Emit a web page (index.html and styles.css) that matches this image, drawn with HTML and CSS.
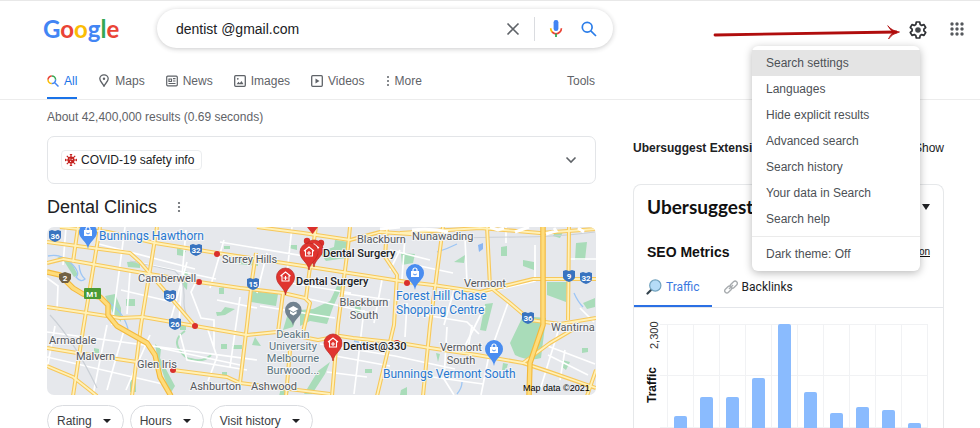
FILE: index.html
```html
<!DOCTYPE html>
<html lang="en">
<head>
<meta charset="utf-8">
<title>dentist @gmail.com - Google Search</title>
<link rel="stylesheet" href="styles.css">
</head>
<body>
<header class="header">
  <div class="topbar">
    <a class="logo" href="#" aria-label="Google"><span class="blue">G</span><span class="red">o</span><span class="yellow">o</span><span class="blue">g</span><span class="green">l</span><span class="red">e</span></a>
    <form class="search" role="search">
      <input class="search-input" type="text" value="dentist @gmail.com" aria-label="Search">
      <button class="icon-button clear" type="button" aria-label="Clear">
        <svg width="14" height="14" viewBox="0 0 14 14"><path d="M1.5 1.5l11 11M12.5 1.5l-11 11" stroke="#5f6368" stroke-width="1.6"/></svg>
      </button>
      <span class="divider"></span>
      <button class="icon-button mic" type="button" aria-label="Search by voice">
        <svg width="14" height="18" viewBox="0 0 14 18" fill="none"><rect x="4.600" y="0" width="4.800" height="11" rx="2.200" fill="#4285f4"/><path d="M1.700 8.300c0 1.700.6 3 1.700 3.900" stroke="#fbbc04" stroke-width="1.700"/><path d="M3.100 12c2.300 2.100 5.500 2.100 7.800 0 .9-.9 1.500-2.100 1.500-3.700" stroke="#ea4335" stroke-width="1.700"/><path d="M7 13.500V17" stroke="#34a853" stroke-width="1.800"/></svg>
      </button>
      <button class="icon-button" type="submit" aria-label="Google Search">
        <svg width="16" height="16" viewBox="0 0 16 16" fill="none" stroke="#2b7de9" stroke-width="1.700"><circle cx="6.200" cy="6.200" r="4.900"/><path d="M9.800 9.800l5.200 5.200"/></svg>
      </button>
    </form>
    <div class="actions">
      <svg class="arrow" width="188" height="18" viewBox="0 0 188 18" fill="none" stroke-linecap="round"><path d="M2 11L183 8" stroke="#b00d0d" stroke-width="2.800"/><path d="M175 2q4 5 11.500 6q-7.500 1.500-11 7q1.500-4 5-7q-3.500-2-5.500-6z" fill="#b00d0d" stroke="#b00d0d" stroke-width=".8"/></svg>
      <div class="settings">
        <button class="icon-button" type="button" aria-label="Settings" aria-expanded="true">
          <svg width="18" height="18" viewBox="0 0 18 18" fill="none"><path d="M7.300 1h3.400l.5 2.500 1.500.9 2.300-.8 1.700 2.900-1.800 1.600v1.800l1.800 1.600-1.700 2.900-2.300-.8-1.500.9-.5 2.500H7.300l-.5-2.500-1.500-.9-2.300.8-1.700-2.900 1.800-1.600V8.100L1.300 6.500 3 3.600l2.300.8 1.500-.9z" stroke="#303236" stroke-width="1.700" stroke-linejoin="round"/><circle cx="9" cy="9" r="2.800" fill="#44474b"/></svg>
        </button>
        <nav class="menu" aria-label="Settings menu">
          <a class="menu-item selected" href="#">Search settings</a>
          <a class="menu-item" href="#">Languages</a>
          <a class="menu-item" href="#">Hide explicit results</a>
          <a class="menu-item" href="#">Advanced search</a>
          <a class="menu-item" href="#">Search history</a>
          <a class="menu-item" href="#">Your data in Search</a>
          <a class="menu-item" href="#">Search help</a>
          <hr class="menu-rule">
          <a class="menu-item" href="#">Dark theme: Off</a>
        </nav>
      </div>
      <button class="icon-button" type="button" aria-label="Google apps">
        <svg width="14" height="14" viewBox="0 0 14 14" fill="#55585c"><circle cx="2" cy="2" r="1.700"/><circle cx="7" cy="2" r="1.700"/><circle cx="12" cy="2" r="1.700"/><circle cx="2" cy="7" r="1.700"/><circle cx="7" cy="7" r="1.700"/><circle cx="12" cy="7" r="1.700"/><circle cx="2" cy="12" r="1.700"/><circle cx="7" cy="12" r="1.700"/><circle cx="12" cy="12" r="1.700"/></svg>
      </button>
    </div>
  </div>
  <nav class="tabs" aria-label="Search types">
    <a class="tab active" href="#"><svg width="12" height="12" viewBox="0 0 12 12" fill="none" stroke-width="1.500"><path d="M1 4.800A3.800 3.800 0 0 1 4.800 1" stroke="#ea4335"/><path d="M4.800 1a3.800 3.800 0 0 1 3.800 3.800" stroke="#34a853"/><path d="M1 4.800a3.800 3.800 0 0 0 3.800 3.800" stroke="#fbbc04"/><path d="M8.600 4.800a3.800 3.800 0 0 1-3.800 3.800M7.500 7.500l4 4" stroke="#4285f4"/></svg>All</a>
    <a class="tab" href="#"><svg width="12" height="13" viewBox="-1 0 12 13" fill="none"><path d="M5 .8a4 4 0 0 0-4.200 4C.8 7.500 4 9.500 5 12.300 6 9.500 9.200 7.500 9.200 4.800A4 4 0 0 0 5 .8z" stroke="#5f6368" stroke-width="1.300"/><circle cx="5" cy="4.800" r="1.200" fill="#5f6368"/></svg>Maps</a>
    <a class="tab" href="#"><svg width="12" height="12" viewBox="0 0 12 12" fill="none" stroke="#5f6368" stroke-width="1.200"><rect x=".7" y="1.200" width="10.600" height="9.600" rx="1"/><path d="M3 4h2.500v2.500H3zM7 3.700h2.500M7 6h2.500M2.500 8.500h7"/></svg>News</a>
    <a class="tab" href="#"><svg width="12" height="12" viewBox="0 0 12 12" fill="none"><rect x=".7" y=".7" width="10.600" height="10.600" rx="1" stroke="#5f6368" stroke-width="1.300"/><path d="M2.500 9.300l2-2.500 1.300 1.500 1.700-2.300 2 3.300z" fill="#5f6368"/><circle cx="3.800" cy="3.800" r=".9" fill="#5f6368"/></svg>Images</a>
    <a class="tab" href="#"><svg width="12" height="12" viewBox="0 0 12 12" fill="none"><rect x=".7" y=".7" width="10.600" height="10.600" rx="1" stroke="#5f6368" stroke-width="1.300"/><path d="M4.500 3.500v5L8.500 6z" fill="#5f6368"/></svg>Videos</a>
    <a class="tab" href="#"><svg width="4" height="12" viewBox="0 0 4 12" fill="#5f6368"><circle cx="2" cy="2" r="1"/><circle cx="2" cy="6" r="1"/><circle cx="2" cy="10" r="1"/></svg>More</a>
    <a class="tab tools" href="#">Tools</a>
  </nav>
</header>

<main class="content">
  <section class="results">
    <p class="stats">About 42,400,000 results (0.69 seconds)</p>
    <div class="covid">
      <a class="covid-chip" href="#"><svg width="12" height="12" viewBox="0 0 12 12" fill="none" stroke="#c5221f"><path d="M6 0v12M0 6h12M1.800 1.800l8.400 8.400M10.200 1.800l-8.400 8.400" stroke-width="1.200"/><path d="M4.800.6h2.400M4.800 11.400h2.400M.6 4.800v2.400M11.400 4.800v2.400"/><circle cx="6" cy="6" r="3.500" fill="#c5221f" stroke="none"/><circle cx="4.900" cy="5" r=".6" fill="#fff" stroke="none"/><circle cx="7.200" cy="5.400" r=".6" fill="#fff" stroke="none"/><circle cx="5.600" cy="7.300" r=".6" fill="#fff" stroke="none"/></svg>COVID-19 safety info</a>
      <button class="icon-button" type="button" aria-label="Expand"><svg width="12" height="8" viewBox="0 0 12 8" fill="none"><path d="M1.500 1.500L6 6l4.500-4.500" stroke="#5f6368" stroke-width="1.600"/></svg></button>
    </div>
    <div class="section-title">
      <h1>Dental Clinics</h1>
      <button class="icon-button" type="button" aria-label="About this result"><svg width="4" height="12" viewBox="0 0 4 12" fill="#5f6368"><circle cx="2" cy="2" r="1.100"/><circle cx="2" cy="6" r="1.100"/><circle cx="2" cy="10" r="1.100"/></svg></button>
    </div>
    <svg class="map" viewBox="47 227 549 168" preserveAspectRatio="xMidYMid slice" role="img" aria-label="Map of dental clinics">
      <defs>
        <g id="bag-pin"><path d="M0 16C-1 8-9 6-9-1a9 9 0 0 1 18 0C9 6 1 8 0 16z" fill="#4a8df0"/><path d="M-4-3h8v6h-8z" fill="#fff"/><path d="M-2-3v-1a2 2 0 0 1 4 0v1" fill="none" stroke="#fff" stroke-width="1.200"/><path d="M-1.800 0q1.800 2 3.600 0" fill="none" stroke="#4a8df0" stroke-width="1"/></g>
        <g id="clinic-pin"><path d="M0 17C-1 9-9 7-9-1a9 9 0 0 1 18 0C9 7 1 9 0 17z" fill="#e0342f" stroke="#b92623" stroke-width=".7"/><path d="M-5-2l5-4 5 4M-3.500-2.500v5.500h7v-5.500M0-2v4M-2 0h4" fill="none" stroke="#fff" stroke-width="1.100"/></g>
        <path id="shield" d="M-6-5l3-1 3 1 3-1 3 1v6q0 3-6 5q-6-2-6-5z" fill="#3873bf"/>
        <g id="main-roads">
          <path d="M47 242L130 253L140 262L195 326"/>
          <path d="M60 227L108 232L155 243L180 247L217 253L310 267L407 282L433 285L480 292L533 279H596"/>
          <path d="M47 263L63 259L143 273L199 282L240 288L283 293L305 298L310 303L303 332"/>
          <path d="M47 307L120 318L143 317L195 326L247 335L277 332L318 340L340 336L353 338L400 343L430 348L477 355L523 363L550 372L596 388"/>
          <path d="M47 348L77 353L137 362M173 370L227 377L240 383L330 394"/>
          <path d="M47 366L73 377L87 388L97 396"/>
          <path d="M78 227L73 262M100 227L83 330L73 396M157 227L141 325L132 396"/>
          <path d="M316 227L310 267L306 298M350 227L348 247L338 325L332 396"/>
          <path d="M256 253L252 280L247 325L240 383M283 293L278 332M290 350L286 396"/>
          <path d="M257 227L303 233L350 240L380 232L440 236"/>
          <path d="M387 227L385 257L397 275L394 325L377 396M443 227L430 325L423 396"/>
          <path d="M487 227L490 287L510 303L530 320L560 324L596 318M569 227L568 320"/>
          <path d="M523 363L550 343L577 327M400 233L480 228L540 233L596 229M596 370L587 396"/>
        </g>
        <g id="freeways">
          <path d="M47 272L60 275L73 288L83 294L100 297L108 305V315L117 326L147 343L155 355L160 377L171 396"/>
          <path d="M543 227V325L530 363L529 396"/>
        </g>
      </defs>
      <rect x="47" y="227" width="549" height="168" fill="#e6e8ec"/>
      <g fill="#a9dcb9">
        <path d="M127 262l13-1v7l-12-1zM126 299h9v7h-9zM57 257l12 1 9 17-4 2-10-16zM105 296l10-2 6 14v14l-8-9zM177 248l9 3-3 5-6-1zM219 288l5-1v7h-5zM182 270l6 2-1 18-4-4zM216 312h5l4-5 10 2-10 6-8 1zM224 246h6v3h-6z"/>
        <path d="M335 240l14 2-3 16-20 3-7-9 15-5zM289 245h8v5l-8-2zM252 291l26 3-2 12-25-4zM300 310l13-1 17-8 7-15 5 1-9 20-6 17-17-3-10 5zM288 313l12-6-7 20-10 3zM236 257l22 5v4l-20-2zM355 305l6 2-1 7-5-2z"/>
        <path d="M401 253l14 1-2 9-11 2zM454 262l11-7-1 8zM501 247l6-1v10h-6zM523 260l11 2v8l-11-4zM576 243l11-1-2 18h-10zM556 230l7 2-3 6-7-2zM547 282h20l-1 20-19-7zM583 303l12-5v9l-8 2z"/>
        <path d="M523 316l23 2-5 40q-12 4-26-3l-5-12zM485 304l8-1-7 28-6-1zM503 363l5 1-2 6h-4zM562 360l8 2-4 8-4-3zM582 348h6v4l-6 1zM436 353l4 1-2 8zM365 369h7v4h-7z"/>
        <path d="M155 344l6 5-1 9 15 28-5 8-13-38zM130 380h6v12h-6zM221 344h6v5h-6zM232 345h10v4h-10zM255 337l6 9-9-1zM180 325h6v5h-6zM401 390l6-3v8h-7zM94 348l5 1v4h-5zM222 372h5v5h-5zM281 388h9l-3 8h-8zM318 371l12-9-5 12-13 20h-8z"/>
      </g>
      <path d="M185 331q-12 8-6 18t12 10q12 4 20-4" fill="none" stroke="#a9dcb9" stroke-width="2"/>
      <path d="M48 256q13-3 23 7t5 14q5 6 9 2q-5-4-6-14M105 300q18 10 23 29M457 394q5-6 5-12M437 252q10-3 20-8M574 293q4 9 9 14M455 345q3 5 6 6M354 341l15 4" fill="none" stroke="#9dc6f5" stroke-width="1.300"/>
      <path d="M478 245l5-2v6l-4 3z" fill="#8ab6f2"/>
      <g fill="none" stroke="#fff" stroke-width="1.700">
        <path d="M47 278l11 8-1 25M66 227l-3 38M125 227l-13 98M186 230l-4 47-3 45M130 272l-3 42M224 240l-14 48M187 262l-17 60M136 262l80 17M95 243l100 26M121 290l60 14M47 332l210 28M55 326l-8 43M107 325l-14 70M124 330l-17 60M150 335l-24 55M47 357l120 28M196 282l-5 10 10 26 13 2v28M160 348l80 17M208 330l9 27-9 24M180 334l7 26 60 10"/>
        <path d="M220 242l90 15M292 227l-5 46M267 253l-10 40M240 297l-10 70M260 306l75 12M217 300l40 8M305 298l70 16M382 280l-8 43M351 293l-60-10M364 310l-10 84M340 293l50 7M400 250l-10 20M320 344l75 12 60 13M330 355l60 11M407 303l-2 34M412 313l55 9 12 12M447 327l-3 52 10 16M472 325l-5 30M490 350l-9 45M327 372l40 5"/>
        <path d="M465 238l2 45M535 245v36l-60 14M454 290l-10 35M485 306l-20 40M508 303l-18 50M570 259h26M580 308l14 14M545 345l50 19M548 355l40 20M560 325l-20 65M390 250l40 10M415 265l38 8M418 375l65 9M565 350l-5 30M506 227v16M405 237l-3 42"/>
      </g>
      <path d="M50 315Q75 342 97 388M130 261l45 10q10 8 9 28t15 28M427 240q50-3 90-3t78-5" fill="none" stroke="#cbd0d6" stroke-width="1.200"/>
      <g fill="none" stroke-linejoin="round">
        <use href="#main-roads" stroke="#f7c85b" stroke-width="4"/>
        <use href="#main-roads" stroke="#fff1b9" stroke-width="1.800"/>
        <use href="#freeways" stroke="#f3b93c" stroke-width="5.500"/>
        <use href="#freeways" stroke="#fedc7b" stroke-width="3.300"/>
      </g>
      <g fill="#d9302c"><circle cx="217" cy="254" r="3"/><circle cx="199" cy="282" r="3"/><circle cx="195" cy="326" r="3"/><circle cx="173" cy="370" r="3"/><circle cx="407" cy="283" r="3"/><circle cx="397" cy="343" r="3"/><circle cx="307" cy="241" r="3.200"/><circle cx="321" cy="243" r="3.200"/><path d="M307 227h11l-5.500 7z"/></g>
      <use href="#shield" x="55" y="236"/><use href="#shield" x="196" y="250"/><use href="#shield" x="170" y="296"/><use href="#shield" x="175" y="324"/><use href="#shield" x="253" y="284"/><use href="#shield" x="569" y="276"/><use href="#shield" x="586" y="278"/><use href="#shield" x="528" y="318"/>
      <path d="M59 274l6-2 6 2v5l-3 4h-6l-3-4z" fill="#716044"/>
      <rect x="84" y="288" width="17" height="11" rx="1" fill="#4a9a35"/>
      <g class="route"><text x="55" y="239">36</text><text x="196" y="253">32</text><text x="170" y="299">30</text><text x="175" y="327">26</text><text x="253" y="287">15</text><text x="569" y="279">9</text><text x="586" y="281">32</text><text x="528" y="321">36</text><text x="65" y="281">2</text><text x="92" y="297">M1</text></g>
      <use href="#bag-pin" x="88" y="233"/><use href="#bag-pin" x="415" y="274"/><use href="#bag-pin" x="494" y="350"/>
      <use href="#clinic-pin" x="314" y="250"/><use href="#clinic-pin" x="309" y="253"/><use href="#clinic-pin" x="285.500" y="278"/><use href="#clinic-pin" x="333" y="344"/>
      <path d="M293 326C292 319 285 317 285 310a8.300 8.300 0 0 1 16.600 0C301.600 317 294 319 293 326z" fill="#71828f"/><path d="M288 309l5.300-3 5.300 3-5.300 3zM290 311v2.500l3.300 2 3.300-2V311l-3.300 2z" fill="#fff"/>
      <g class="place">
        <text x="222" y="263">Surrey Hills</text><text x="138" y="282">Camberwell</text><text x="357" y="243">Blackburn</text><text x="412" y="240">Nunawading</text><text x="464" y="287">Vermont</text><text x="551" y="331">Wantirna</text><text x="49" y="344">Armadale</text><text x="76" y="360">Malvern</text><text x="137" y="368">Glen Iris</text><text x="190" y="390">Ashburton</text><text x="251" y="390">Ashwood</text>
        <g class="middle"><text x="364" y="306">Blackburn</text><text x="364" y="319">South</text><text x="461" y="351">Vermont</text><text x="461" y="364">South</text></g>
      </g>
      <g class="place campus middle"><text x="293" y="338">Deakin</text><text x="293" y="350">University</text><text x="293" y="362">Melbourne</text><text x="293" y="374">Burwood...</text></g>
      <g class="shop"><text x="99" y="240">Bunnings Hawthorn</text><text x="396" y="300">Forest Hill Chase</text><text x="396" y="314">Shopping Centre</text><text x="383" y="378">Bunnings Vermont South</text></g>
      <g class="clinic"><text x="323" y="257">Dental Surgery</text><text x="296" y="285">Dental Surgery</text><text x="343" y="350">Dentist@330</text></g>
      <path d="M380 229l20-2M412 230q20-2 36 2M490 227l8 3 6-2M515 232l14-5M546 234l10-3-2-3M578 228l6 4" fill="none" stroke="#fff" stroke-width="3"/>
      <text class="credit" x="523" y="391">Map data ©2021</text>
    </svg>
    <div class="filters">
      <button class="filter" type="button">Rating<span class="caret"></span></button>
      <button class="filter" type="button">Hours<span class="caret"></span></button>
      <button class="filter" type="button">Visit history<span class="caret"></span></button>
    </div>
  </section>

  <aside class="sidebar">
    <div class="extension"><strong>Ubersuggest Extension</strong><a href="#">Show</a></div>
    <section class="metrics">
      <div class="metrics-head"><h2>Ubersuggest</h2><span class="caret"></span></div>
      <div class="metrics-head seo"><h3>SEO Metrics</h3><a href="#">Configuration</a></div>
      <div class="metric-tabs">
        <button class="metric-tab active" type="button"><svg width="16" height="16" viewBox="0 0 16 16"><path d="M1.500 14.500l4-4" stroke="#33424c" stroke-width="2.200" stroke-linecap="round"/><circle cx="9.300" cy="6.500" r="5.600" fill="#b5dcf7" stroke="#72a3bf" stroke-width="1.200"/></svg>Traffic</button>
        <button class="metric-tab" type="button"><svg width="14" height="14" viewBox="0 0 14 14" fill="none" stroke="#a9adb0" stroke-width="1.400"><rect x="5.800" y="2.400" width="8" height="4.400" rx="2.200" transform="rotate(-45 9.800 4.600)"/><rect x=".2" y="7.300" width="8" height="4.400" rx="2.200" transform="rotate(-45 4.200 9.500)"/><path d="M5 9l4-4"/></svg>Backlinks</button>
      </div>
      <svg class="chart" viewBox="634 308 309 120" role="img" aria-label="Traffic bar chart">
        <path d="M660 324.500H928M660 375.500H928M660 427.500H928M667.500 324V428M693.500 324V428M719.500 324V428M745.500 324V428M771.500 324V428M797.500 324V428M823.500 324V428M849.500 324V428M875.500 324V428M901.500 324V428M927.500 324V428" stroke="#f1f2f4" fill="none"/>
        <g fill="#8abbfe"><rect x="674" y="416" width="13" height="20" rx="2"/><rect x="700" y="397" width="13" height="40" rx="2"/><rect x="726" y="397" width="13" height="40" rx="2"/><rect x="752" y="378" width="13" height="60" rx="2"/><rect x="778" y="324" width="13" height="110" rx="2"/><rect x="804" y="392" width="13" height="40" rx="2"/><rect x="830" y="413" width="13" height="20" rx="2"/><rect x="856" y="407" width="13" height="30" rx="2"/><rect x="882" y="410" width="13" height="30" rx="2"/><rect x="908" y="423" width="13" height="10" rx="2"/></g>
        <text class="tick" transform="translate(658 349) rotate(-90)">2,300</text>
        <text class="axis" transform="translate(656 403) rotate(-90)">Traffic</text>
      </svg>
    </section>
  </aside>
</main>
</body>
</html>
```
FILE: styles.css
```css
* { box-sizing: border-box; }

body {
  margin: 0;
  background: #fff;
  color: #202124;
  font: 12px/16px "Liberation Sans", Arial, sans-serif;
}

a { color: inherit; text-decoration: none; }
button { font: inherit; color: inherit; }
svg { flex: none; }
h1, h2, h3, p { margin: 0; }

.header {
  border-top: 1px solid #e8e8e8;
  border-bottom: 1px solid #ececec;
}

.topbar {
  display: flex;
  align-items: center;
  padding: 8px 16px 0 43px;
}

.logo {
  width: 114px;
  font: 700 24px/38px Lato, sans-serif;
}

.blue { color: #4285f4; }
.red { color: #ea4335; }
.yellow { color: #fbbc05; }
.green { color: #34a853; }

.search {
  display: flex;
  align-items: center;
  width: 456px;
  height: 39px;
  padding: 0 16px 0 19px;
  border-radius: 20px;
  background: #fff;
  box-shadow: 0 1px 5px rgba(32, 33, 36, 0.24);
}

.search-input {
  flex: 1;
  min-width: 0;
  padding: 0;
  border: 0;
  outline: 0;
  background: transparent;
  color: #202124;
  font: 14px/20px "Liberation Sans", Arial, sans-serif;
}

.icon-button {
  display: flex;
  align-items: center;
  justify-content: center;
  padding: 0;
  border: 0;
  background: none;
}

.divider {
  width: 1px;
  height: 24px;
  margin: 0 14px;
  background: #dadce0;
}

.mic { margin-right: 18px; }

.actions {
  display: flex;
  align-items: center;
  margin-left: auto;
}

.arrow { margin-top: 8px; }

.settings {
  position: relative;
  margin: 2px 23px 0 8px;
}

.menu {
  position: absolute;
  z-index: 2;
  top: 25px;
  right: 7px;
  width: 168px;
  padding: 4px 0;
  border-radius: 6px;
  background: #fff;
  box-shadow: 0 2px 9px rgba(0, 0, 0, 0.28);
}

.menu-item {
  display: block;
  padding: 0 14px;
  color: #4d5156;
  line-height: 26px;
}

.selected { background: #e4e4e4; }

.menu-rule {
  height: 1px;
  margin: 4px 0;
  border: 0;
  background: #ebebeb;
}

.tabs {
  display: flex;
  width: 595px;
  padding-left: 47px;
  margin-top: 14px;
  color: #5f6368;
}

.tab {
  display: flex;
  align-items: center;
  gap: 5px;
  height: 37px;
  padding-top: 2px;
  margin-right: 21px;
  border-bottom: 2px solid transparent;
}

.active { color: #1a73e8; }
.tab.active { border-color: #1a73e8; }
.tools { margin: 0 0 0 auto; }

.content {
  display: grid;
  grid-template-columns: 549fr 311fr;
  gap: 37px;
  padding: 0 36px 0 47px;
}

.results, .sidebar { min-width: 0; }

.stats {
  padding: 9px 0 11px;
  color: #5f6368;
}

.covid {
  display: flex;
  align-items: center;
  justify-content: space-between;
  height: 48px;
  padding: 0 18px 0 13px;
  border: 1px solid #e3e5e8;
  border-radius: 7px;
}

.covid-chip {
  display: flex;
  align-items: center;
  gap: 4px;
  padding: 1px 7px 1px 3px;
  border: 1px solid #ebedef;
  border-radius: 4px;
}

.section-title {
  display: flex;
  align-items: center;
  gap: 20px;
  height: 43px;
  padding-top: 3px;
}

.section-title h1 { font-size: 18px; font-weight: 400; line-height: 24px; }

.map {
  display: block;
  width: 100%;
  height: auto;
  border-radius: 7px;
}

.map text { font-family: Roboto, sans-serif; }
.place { font-size: 11px; fill: #55585d; }
.place text, .shop text, .clinic text { paint-order: stroke; stroke: #f4f5f6; stroke-width: 2px; }
.middle { text-anchor: middle; }
.campus { fill: #5b7480; }
.shop { font-size: 12px; fill: #2878d0; }
.clinic { font-size: 11px; font-weight: 500; fill: #202124; }
.route { font-size: 8px; font-weight: 700; fill: #fff; text-anchor: middle; }
.map .credit { font: 9px "Liberation Sans", Arial, sans-serif; }

.filters {
  display: flex;
  gap: 6px;
  padding-top: 10px;
}

.filter {
  display: flex;
  align-items: center;
  gap: 11px;
  height: 31px;
  padding: 0 12px 0 9px;
  border: 1px solid #dadce0;
  border-radius: 16px;
  background: #fff;
  color: #3c4043;
}

.caret {
  border: 4px solid transparent;
  border-top-color: #202124;
  border-bottom: 0;
}

.extension {
  display: flex;
  align-items: center;
  justify-content: space-between;
  padding: 40px 0 28px;
}

.extension strong { font-size: 12px; }

.metrics {
  border: 1px solid #e6e8ea;
  border-bottom: 0;
  border-radius: 8px 8px 0 0;
}

.metrics-head {
  display: flex;
  align-items: center;
  justify-content: space-between;
  padding: 9px 13px 10px;
  color: #111;
}

.metrics-head h2 { font: 700 19px/26px Lato, sans-serif; }
.metrics-head .caret { border-width: 6px 4px 0; }
.metrics-head h3 { font-size: 14px; line-height: 24px; }
.seo { padding: 10px 13px 7px; }
.seo a { font-size: 10px; text-decoration: underline; }

.metric-tabs {
  display: flex;
  border-bottom: 1px solid #e4e6ea;
}

.metric-tab {
  display: flex;
  align-items: center;
  gap: 4px;
  height: 36px;
  padding: 0 12px 2px;
  border: 0;
  border-bottom: 2px solid transparent;
  background: none;
  font-family: Roboto, sans-serif;
}

.metric-tab.active { border-color: #2b70e4; color: #3b78e0; }
.chart { display: block; width: 100%; height: auto; }
.tick { font-size: 11px; fill: #333; }
.axis { font-size: 12px; font-weight: 700; fill: #111; }
```
